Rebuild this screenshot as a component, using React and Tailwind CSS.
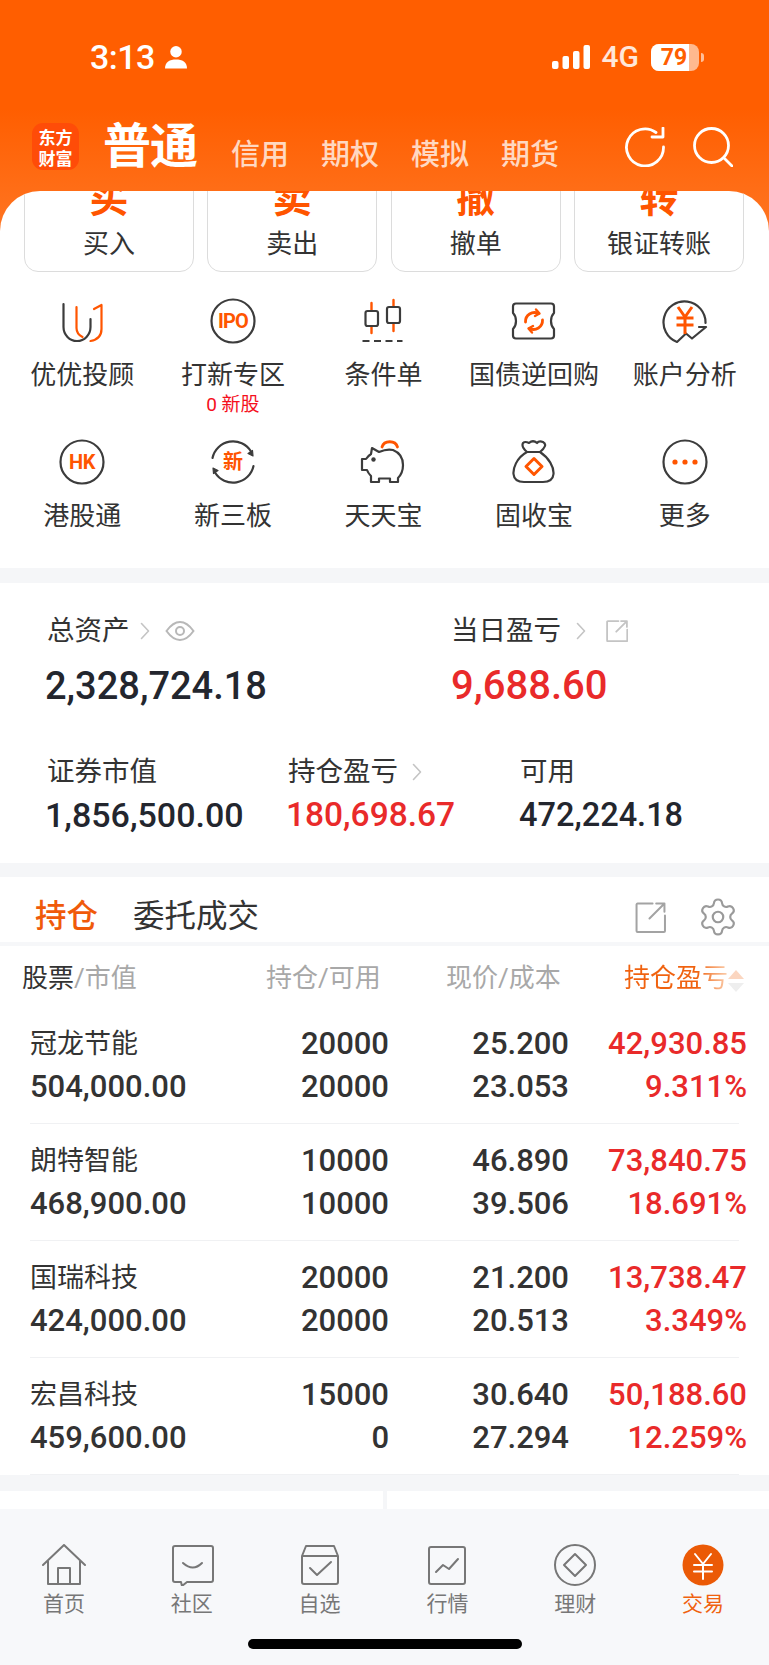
import React from "react";
import { Settings } from "lucide-react";

const DK = "#3c3c3c";
const OR = "#ff5500";

const Ico = ({ children, w = 46, h = 46 }) => (
  <svg width={w} height={h} viewBox={`0 0 ${w} ${h}`} fill="none" strokeLinecap="round" strokeLinejoin="round">{children}</svg>
);

const Chevron = () => (
  <svg width="10" height="18" viewBox="0 0 10 18" fill="none" stroke="#c4c4c4" strokeWidth="1.6" strokeLinecap="round" strokeLinejoin="round"><path d="M1.5 1.5L8.5 9L1.5 16.5" /></svg>
);

const ShareOut = ({ size = 30, color = "#a3a3a3", sw = 2 }) => (
  <svg width={size} height={size} viewBox="0 0 30 30" fill="none" stroke={color} strokeWidth={sw * 30 / size} strokeLinecap="round" strokeLinejoin="round">
    <path d="M17 1.5H2.5a1 1 0 0 0-1 1V28a1 1 0 0 0 1 1H28a1 1 0 0 0 1-1V13" />
    <path d="M14 16L28.5 1.5M20.5 1.5H28.5V9.5" />
  </svg>
);

const gridIcons = {
  uu: (
    <Ico>
      <path d="M4.5 6V29a13.5 14 0 0 0 27 0V21" stroke={DK} strokeWidth="2.2" />
      <path d="M17.5 9V30q0 6 6 9" stroke={OR} strokeWidth="2.2" />
      <path d="M35 11l7.5-4V31q0 10-11 12" stroke={OR} strokeWidth="2.2" />
    </Ico>
  ),
  ipo: (
    <Ico>
      <circle cx="23" cy="23" r="21.5" stroke={DK} strokeWidth="2.2" />
      <text x="23" y="30" textAnchor="middle" fontSize="20" fontWeight="700" fill={OR} letterSpacing="-0.8">IPO</text>
    </Ico>
  ),
  candle: (
    <Ico>
      <path d="M11.5 5V35M33.5 2V33" stroke={OR} strokeWidth="2.4" />
      <rect x="5.5" y="13" width="12.5" height="15" rx="2" fill="#fff" stroke={DK} strokeWidth="2.2" />
      <rect x="27" y="9" width="13" height="16" rx="2" fill="#fff" stroke={DK} strokeWidth="2.2" />
      <path d="M2.5 43H42.5" stroke={DK} strokeWidth="2.2" strokeDasharray="7 4.5" strokeLinecap="butt" />
    </Ico>
  ),
  ticket: (
    <Ico>
      <path d="M5 5.5H40a3 3 0 0 1 3 3V15q-3 3-3 8t3 8v6.5a3 3 0 0 1-3 3H5a3 3 0 0 1-3-3V31q3-3 3-8T2 15V8.5a3 3 0 0 1 3-3Z" stroke={DK} strokeWidth="2.2" />
      <path d="M14.5 24a9 9 0 0 1 13-8.5M31.5 22a9 9 0 0 1-13 8.5" stroke={OR} strokeWidth="2.8" />
      <path d="M25 11.5l3.5 4-4.500 2.500M21 34.500l-3.500-4 4.500-2.500" stroke={OR} strokeWidth="2.4" />
    </Ico>
  ),
  yen: (
    <Ico>
      <path d="M43.500 25A21 21 0 1 0 15 44L24 35.500L30 40.500L44 29H37" stroke={DK} strokeWidth="2.2" />
      <path d="M16 9L23 19L30 9M14.500 20H31.500M14.500 27H31.500M23 19V36" stroke={OR} strokeWidth="3" strokeLinecap="butt" strokeLinejoin="miter" />
    </Ico>
  ),
  hk: (
    <Ico>
      <circle cx="23" cy="23" r="21.5" stroke={DK} strokeWidth="2.2" />
      <text x="23" y="30" textAnchor="middle" fontSize="20" fontWeight="700" fill={OR} letterSpacing="-0.5">HK</text>
    </Ico>
  ),
  xin: (
    <Ico>
      <path d="M2.500 19A21 21 0 0 1 41 12.500M43.500 27A21 21 0 0 1 5 33.500" stroke={DK} strokeWidth="2.2" />
      <path d="M42.500 11.500L43 17L38 14.500ZM3.500 34.500L3 29L8 31.500Z" fill={DK} stroke={DK} strokeWidth="1.200" />
      <text x="23" y="30" textAnchor="middle" fontSize="20" fontWeight="700" fill={OR}>新</text>
    </Ico>
  ),
  pig: (
    <Ico>
      <path d="M22 8a8 7 0 0 1 15.500 0" stroke={OR} strokeWidth="2.800" />
      <path d="M12 9L19 13Q27 9.500 33 11Q43 15 43 26Q43 34 38 39V43H30V39.500H19V43H11V37Q8 34 7 31H2V20H6Q8 17 11 15Z" stroke={DK} strokeWidth="2.200" />
      <circle cx="13.500" cy="20.500" r="2.200" fill={DK} />
    </Ico>
  ),
  bag: (
    <Ico>
      <path d="M16 13C5 19 2 30 2.500 35C3 41 8 43 13 43H32C38 43 42 41 42.500 35C43 28 38 19 29 13C34 9 36 5 32 3Q28 1.500 26 4Q22 .5 18 4Q14 2 12 4Q10 8 16 13ZM16 13H29" stroke={DK} strokeWidth="2.200" />
      <path d="M23 19.500L31 27.500L23 35.500L15 27.500Z" stroke={OR} strokeWidth="3" />
    </Ico>
  ),
  more: (
    <Ico>
      <circle cx="23" cy="23" r="21.500" stroke={DK} strokeWidth="2.200" />
      <circle cx="13" cy="23" r="2.600" fill={OR} />
      <circle cx="23" cy="23" r="2.600" fill={OR} />
      <circle cx="33" cy="23" r="2.600" fill={OR} />
    </Ico>
  ),
};

const navStroke = { stroke: "#777", strokeWidth: 2 };
const navIcons = [
  <path d="M1 21L22 1L43 21M6 17V40H38V17M16 40V24H28V40" {...navStroke} />,
  <g {...navStroke}><path d="M5 2H41a2 2 0 0 1 2 2V36a2 2 0 0 1-2 2H17L12 42L11 38H5a2 2 0 0 1-2-2V4a2 2 0 0 1 2-2Z" /><path d="M13 19q10 9 19 0" /></g>,
  <g {...navStroke}><path d="M4 12L8 2H36L40 12M4 12H40V38a2 2 0 0 1-2 2H6a2 2 0 0 1-2-2Z" /><path d="M12 24L19 31L33 18" /></g>,
  <g {...navStroke}><rect x="4" y="3" width="36" height="37" rx="2" /><path d="M11 28L18 21L24 25L33 15" /></g>,
  <g {...navStroke}><circle cx="22" cy="21" r="20" /><path d="M22 10L33 21L22 32L11 21Z" /></g>,
  <g><circle cx="22" cy="21" r="20.500" fill="#eb5a06" /><path d="M14 10L22 20L30 10M13 21H31M13 27.500H31M22 20V35" stroke="#fff" strokeWidth="2" /></g>,
];

const quick = [["买", "买入"], ["卖", "卖出"], ["撤", "撤单"], ["转", "银证转账"]];
const grid = [
  ["uu", "优优投顾"], ["ipo", "打新专区", "0 新股"], ["candle", "条件单"], ["ticket", "国债逆回购"], ["yen", "账户分析"],
  ["hk", "港股通"], ["xin", "新三板"], ["pig", "天天宝"], ["bag", "固收宝"], ["more", "更多"],
];
const rows = [
  ["冠龙节能", "504,000.00", "20000", "20000", "25.200", "23.053", "42,930.85", "9.311%"],
  ["朗特智能", "468,900.00", "10000", "10000", "46.890", "39.506", "73,840.75", "18.691%"],
  ["国瑞科技", "424,000.00", "20000", "20000", "21.200", "20.513", "13,738.47", "3.349%"],
  ["宏昌科技", "459,600.00", "15000", "0", "30.640", "27.294", "50,188.60", "12.259%"],
];
const nav = ["首页", "社区", "自选", "行情", "理财", "交易"];

export default function App() {
  return (
    <div className="w-[769px] h-[1665px] overflow-hidden flex flex-col bg-[#f5f6f8] font-['Roboto','Noto_Sans_CJK_SC',sans-serif]">
      {/* header */}
      <div className="h-[231px] shrink-0 bg-[linear-gradient(180deg,#ff5e00_0%,#ff5e00_47%,#ff7522_100%)] text-white">
        <div className="h-[114px] flex items-center pl-[90px] pr-[65px]">
          <span className="text-[34px] font-medium leading-none tracking-[-0.5px]">3:13</span>
          <svg className="ml-[10px]" width="22" height="24" viewBox="0 0 23 24" fill="#fff">
            <circle cx="11.500" cy="6.500" r="6" />
            <path d="M0 24C0 17 5 14.500 11.500 14.500S23 17 23 24Z" />
          </svg>
          <div className="ml-auto flex items-center">
            <svg width="38" height="24" viewBox="0 0 38 24" fill="#fff">
              <rect x="0" y="16" width="6.500" height="8" rx="2" />
              <rect x="10.500" y="11" width="6.500" height="13" rx="2" />
              <rect x="21" y="6" width="6.500" height="18" rx="2" />
              <rect x="31.500" y="0" width="6.500" height="24" rx="2" />
            </svg>
            <span className="ml-[12px] text-[30px] font-medium leading-none text-white/85">4G</span>
            <div className="ml-[12px] relative w-[48px] h-[27px] rounded-[8px] bg-[#ffb98f] overflow-hidden">
              <div className="h-full w-[38px] bg-white" />
              <span className="absolute inset-0 pr-[2px] flex items-center justify-center text-[23px] font-bold leading-none text-[#ff5e00]">79</span>
            </div>
            <div className="ml-[2px] w-[3px] h-[9px] rounded-r-full bg-white/60" />
          </div>
        </div>
        <div className="mt-[9px] h-[47px] flex items-center pl-[32px] pr-[36px]">
          <div className="w-[47px] h-[47px] rounded-[11px] bg-[#ff4c08] flex flex-col items-center justify-center text-[17px] leading-[21px] font-bold font-['Noto_Sans_CJK_SC',sans-serif]">
            <span className="block h-[21px]">东方</span>
            <span className="block h-[21px]">财富</span>
          </div>
          <span className="ml-[24px] text-[48px] leading-[48px] font-bold tracking-[-1px]">普通</span>
          <div className="ml-[34px] mt-[16px] flex gap-[32px] text-[29px] leading-[34px] font-medium text-white/75">
            <span>信用</span><span>期权</span><span>模拟</span><span>期货</span>
          </div>
          <div className="ml-auto flex items-center gap-[28px]">
            <svg width="40" height="40" viewBox="0 0 40 40" fill="none" stroke="#fff" strokeWidth="2.800" strokeLinecap="round" strokeLinejoin="round">
              <path d="M38.500 20A18.500 18.500 0 1 1 31 5.500" />
              <path d="M38 1V10H27" />
            </svg>
            <svg width="40" height="40" viewBox="0 0 40 40" fill="none" stroke="#fff" strokeWidth="2.800" strokeLinecap="round">
              <circle cx="18.500" cy="18.500" r="17" />
              <path d="M31 31L39.500 39.500" />
            </svg>
          </div>
        </div>
      </div>

      {/* quick + grid card */}
      <div className="-mt-[40px] relative h-[377px] shrink-0 rounded-t-[40px] bg-white overflow-hidden">
        <div className="-mt-[19px] h-[100px] pl-[24px] pr-[25px] grid grid-cols-4 gap-[13.500px]">
          {quick.map(([g, l]) => (
            <div key={l} className="rounded-[14px] border border-[#dcdcdc] flex flex-col items-center">
              <span className="mt-[-2px] h-[56px] text-[39px] leading-[56px] font-bold text-[#ff5500]">{g}</span>
              <span className="text-[26px] leading-[34px] text-[#333]">{l}</span>
            </div>
          ))}
        </div>
        <div className="mt-[26px] pl-[7px] pr-[9px] grid grid-cols-5 auto-rows-[141px]">
          {grid.map(([k, l, sub]) => (
            <div key={l} className="flex flex-col items-center">
              {gridIcons[k]}
              <span className="mt-[14px] text-[26px] leading-[34px] text-[#333] whitespace-nowrap">{l}</span>
              {sub && <span className="mt-[3px] text-[19px] leading-[20px] text-[#f5101d] whitespace-nowrap">{sub}</span>}
            </div>
          ))}
        </div>
      </div>

      {/* assets */}
      <div className="mt-[15px] h-[280px] shrink-0 bg-white pt-[31px]">
        <div className="flex">
          <div className="w-[405px] pl-[47px]">
            <div className="h-[34px] flex items-center text-[27.500px] text-[#333]">
              总资产
              <span className="ml-[10px]"><Chevron /></span>
              <svg className="ml-[15px]" width="30" height="22" viewBox="0 0 30 22" fill="none" stroke="#b8b8b8" strokeWidth="2">
                <path d="M1.500 11Q8 2 15 2T28.500 11Q22 20 15 20T1.500 11Z" />
                <circle cx="15" cy="11" r="4" />
              </svg>
            </div>
            <div className="mt-[16px] -ml-[2px] text-[38px] leading-[44px] font-medium text-[#23262e]">2,328,724.18</div>
          </div>
          <div className="flex-1 -ml-[1px] pl-[47px]">
            <div className="h-[34px] flex items-center text-[27.500px] text-[#333]">
              当日盈亏
              <span className="ml-[15px]"><Chevron /></span>
              <span className="ml-[20px]"><ShareOut size={22} color="#c4c4c4" sw={1.800} /></span>
            </div>
            <div className="mt-[16px] text-[40px] leading-[44px] font-medium text-[#e92a2a]">9,688.60</div>
          </div>
        </div>
        <div className="mt-[47px] flex">
          <div className="w-[288px] pl-[47px]">
            <div className="h-[34px] text-[27.500px] leading-[34px] text-[#333]">证券市值</div>
            <div className="mt-[6px] -ml-[2px] text-[34px] leading-[40px] font-medium text-[#23262e] whitespace-nowrap">1,856,500.00</div>
          </div>
          <div className="w-[232px]">
            <div className="h-[34px] flex items-center text-[27.500px] text-[#333]">
              持仓盈亏
              <span className="ml-[14px]"><Chevron /></span>
            </div>
            <div className="mt-[6px] -ml-[2px] text-[33.500px] leading-[40px] font-medium text-[#e92a2a] whitespace-nowrap">180,698.67</div>
          </div>
          <div className="flex-1">
            <div className="h-[34px] text-[27.500px] leading-[34px] text-[#333]">可用</div>
            <div className="mt-[6px] -ml-[1px] text-[32.500px] leading-[40px] font-medium text-[#23262e] whitespace-nowrap">472,224.18</div>
          </div>
        </div>
      </div>

      {/* holdings */}
      <div className="mt-[14px] h-[598px] shrink-0 bg-white">
        <div className="h-[65px] pt-[15px] flex items-center pl-[35px] pr-[30px]">
          <span className="text-[31.500px] font-medium text-[#f05a0a]">持仓</span>
          <span className="ml-[35px] text-[31.500px] text-[#333]">委托成交</span>
          <div className="ml-auto flex items-center gap-[31px]">
            <ShareOut size={31} />
            <Settings size={42} color="#9a9a9a" strokeWidth={1.250} />
          </div>
        </div>
        <div className="h-[4px] bg-[#f6f7f9]" />
        <div className="h-[61px] pt-[4px] flex items-center text-[26px] text-[#a8a8a8] relative">
          <div className="w-[266px] pl-[22px]"><span className="text-[#333]">股票</span>/市值</div>
          <div className="w-[180px]">持仓/可用</div>
          <div className="w-[178px]">现价/成本</div>
          <span className="bg-[linear-gradient(90deg,#f0620f_70%,#fbd0b0_100%)] bg-clip-text text-transparent">持仓盈亏</span>
          <svg className="absolute left-[728px] top-[24px]" width="16" height="22" viewBox="0 0 16 22">
            <path d="M8 0L16 9H0Z" fill="#fbd6c0" />
            <path d="M8 22L16 13H0Z" fill="#eeeeee" />
          </svg>
        </div>
        {rows.map((r) => (
          <div key={r[0]} className="mx-[30px] h-[117px] pt-[16px] border-b-[1px] border-[#f0f1f3] grid grid-cols-[229px_130px_180px_178px] auto-rows-[43px] items-center text-[31px] font-medium text-[#333] text-right whitespace-nowrap">
            <div className="text-left text-[27px] font-normal">{r[0]}</div>
            <div>{r[2]}</div>
            <div>{r[4]}</div>
            <div className="text-[#e92a2a]">{r[6]}</div>
            <div className="text-left">{r[1]}</div>
            <div>{r[3]}</div>
            <div>{r[5]}</div>
            <div className="text-[#e92a2a]">{r[7]}</div>
          </div>
        ))}
      </div>

      {/* peeking next row */}
      <div className="mt-[16px] h-[18px] shrink-0 flex gap-[4px]">
        <div className="w-[383px] bg-white" />
        <div className="flex-1 bg-white" />
      </div>

      {/* nav */}
      <div className="flex-1 bg-[#f7f8fa] pt-[35px]">
        <div className="grid grid-cols-6 pr-[2px]">
          {nav.map((l, i) => (
            <div key={l} className="flex flex-col items-center">
              <svg width="44" height="42" viewBox="0 0 44 42" fill="none" strokeLinecap="round" strokeLinejoin="round">{navIcons[i]}</svg>
              <span className={`mt-[4px] text-[21px] leading-[28px] ${i === 5 ? "text-[#f0620f]" : "text-[#777]"}`}>{l}</span>
            </div>
          ))}
        </div>
        <div className="mt-[21px] mx-auto w-[274px] h-[10px] rounded-full bg-black" />
      </div>
    </div>
  );
}
